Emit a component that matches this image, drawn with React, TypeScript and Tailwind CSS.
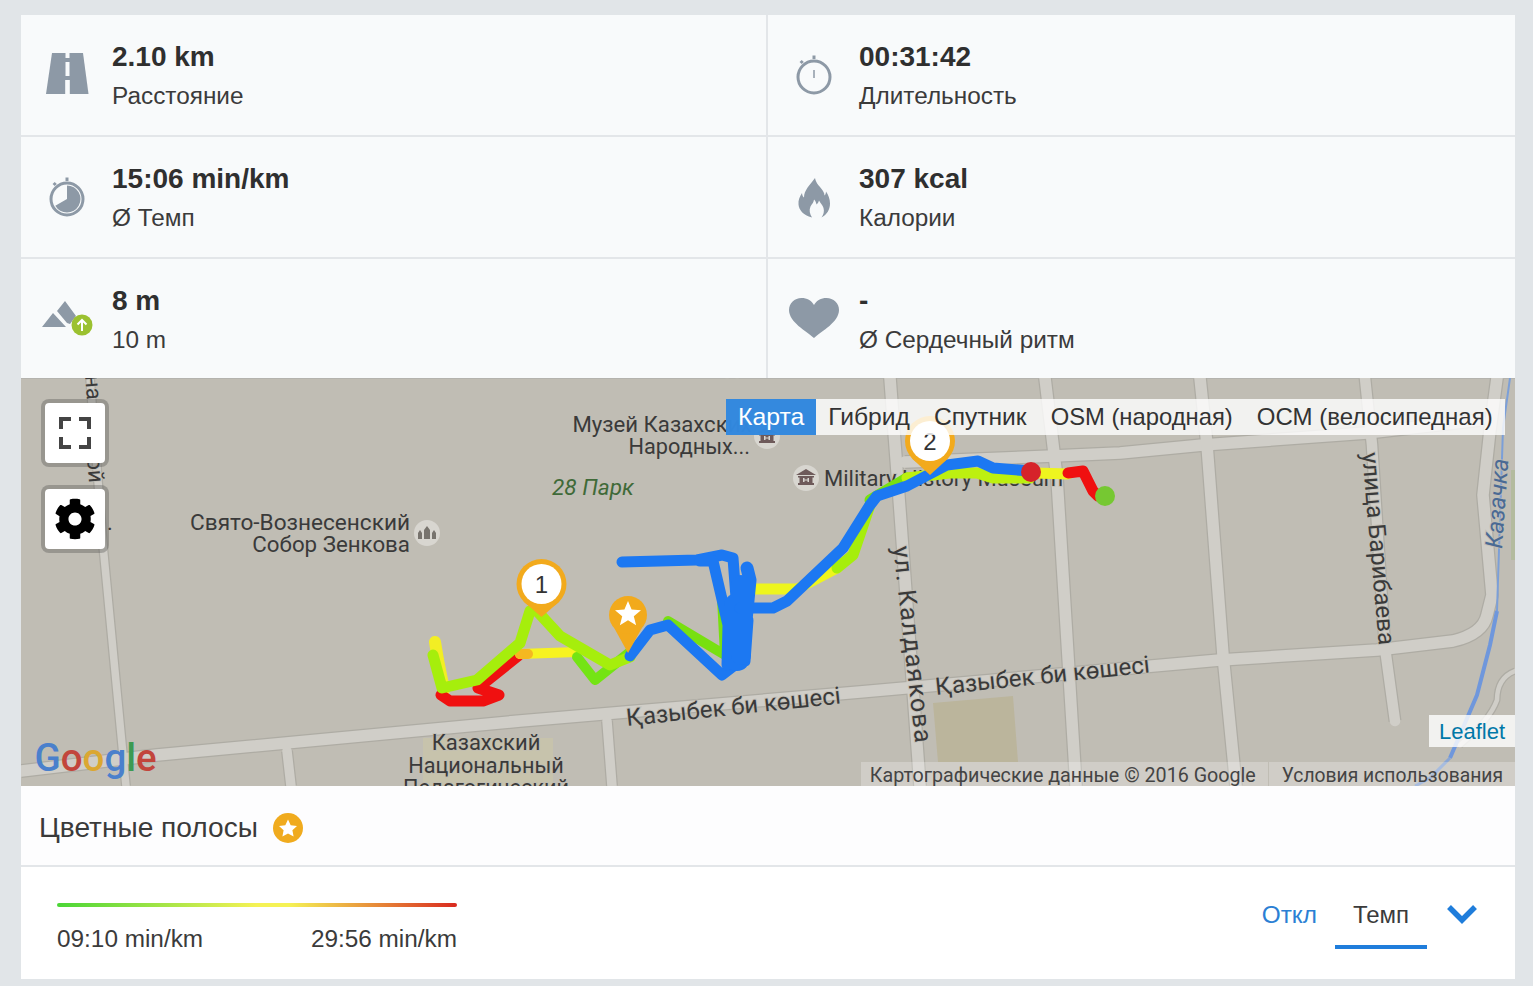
import React from "react";
import { FaCog } from "react-icons/fa";

const G = "#8d99a6";

function RoadIcon() {
  return (
    <svg className="mb-1" width="44" height="42" viewBox="0 0 44 42">
      <path fill={G} d="M7 0h31l5.500 41H1z" />
      <path fill="#f8fafb" d="M20.500 0h4v5h-4zM20.500 9h4v14h-4zM20.200 27h4.600v14h-4.600z" />
    </svg>
  );
}
function WatchIcon() {
  return (
    <svg width="40" height="42" viewBox="0 0 40 42">
      <rect x="18.500" y="0.500" width="3" height="3.500" fill={G} />
      <rect x="6" y="6" width="3" height="3" fill={G} transform="rotate(-45 7 7)" />
      <circle cx="20" cy="22" r="16" fill="none" stroke={G} strokeWidth="3" />
      <path d="M20 22V8.500a13.500 13.500 0 1 1-11.700 20.250z" fill={G} />
    </svg>
  );
}
function TimerIcon() {
  return (
    <svg width="40" height="42" viewBox="0 0 40 42">
      <rect x="18.500" y="0.500" width="3" height="3.500" fill={G} />
      <rect x="6" y="6" width="3" height="3" fill={G} transform="rotate(-45 7 7)" />
      <circle cx="20" cy="22" r="16" fill="none" stroke={G} strokeWidth="3" />
      <rect x="19.250" y="15" width="1.500" height="8" fill={G} />
    </svg>
  );
}
function FlameIcon() {
  return (
    <svg width="32" height="40" viewBox="0 0 32 40">
      <path
        fill={G}
        d="M17 0c1 6 5 8 8 13 1 1.500 1.500 3 1.500 4.500 1-1 1.500-2.500 1.500-4 2.500 3.500 4 7.500 4 12 0 6-3 11-8.500 14 2-3 3-6 2-9.500-.8-3-3-4.500-4.500-7.500-.5 2-1.500 3-2.500 4-.5-2.500-1-3.500-2.500-5-.2 3-2.200 4.500-3.500 7-1.600 3.500-.8 7.500 1.500 11C5 37 1 32 .5 26.500 0 22 2 18 4 15c.2 2 .8 3.500 2 4.500C6 12 12 7 17 0z"
      />
    </svg>
  );
}
function HeartIcon() {
  return (
    <svg className="mb-[3px]" width="50" height="40" viewBox="0 0 50 40">
      <path
        fill={G}
        d="M25 40C17 33 0 24 0 12 0 5 5.500 0 12.500 0 18 0 22.500 2.500 25 7 27.500 2.500 32 0 37.500 0 44.500 0 50 5 50 12c0 12-17 21-25 28z"
      />
    </svg>
  );
}
function MountainIcon() {
  return (
    <svg className="ml-[3px]" width="52" height="38" viewBox="0 0 52 38">
      <path fill={G} d="M0 26 11 12 24 26zM15 10 23 0l11 15-6 8-3-1z" />
      <circle cx="40" cy="24" r="10.500" fill="#9bc130" />
      <path d="M40 30v-11M35.500 23.500 40 19l4.500 4.500" fill="none" stroke="#fff" strokeWidth="2" />
    </svg>
  );
}

function Stat({
  icon,
  value,
  label,
  border,
  h,
}: {
  icon: React.ReactNode;
  value: string;
  label: string;
  border?: boolean;
  h: string;
}) {
  return (
    <div className={`flex ${h} ${border ? "border-r-2 border-[#e3e6e9]" : ""}`}>
      <div className="flex w-[91px] shrink-0 items-center justify-center pt-[2px]">{icon}</div>
      <div className="pt-6">
        <div className="h-9 text-[28px] leading-9 font-bold text-[#2f2f2f]">{value}</div>
        <div className="mt-[3px] h-9 text-[24.35px] leading-9 text-[#3b3b3b]">{label}</div>
      </div>
    </div>
  );
}

const blue = "#1c78f2";

function Road({ d, w = 14 }: { d: string; w?: number }) {
  return (
    <g fill="none" strokeLinejoin="round">
      <path d={d} stroke="#aeaca4" strokeWidth={w} />
    </g>
  );
}
function RoadFill({ d, w = 12 }: { d: string; w?: number }) {
  return <path d={d} fill="none" stroke="#d0cec8" strokeWidth={w} strokeLinejoin="round" strokeLinecap="round" />;
}

const roads = [
  { d: "M21 771 157 755 520 721 860 692 1220 660 1377 650 1453 641Q1483 634 1487 615L1492 595 1483 495 1490 430 1497 378", w: 14 },
  { d: "M905 462 1053 456 1120 453 1203 445 1367 433 1480 420", w: 14 },
  { d: "M890 378 900 511 920 786", w: 14 },
  { d: "M1045 378 1057 478 1076 786", w: 14 },
  { d: "M1200 378 1207 445 1223 655 1236 786", w: 14 },
  { d: "M1365 378 1372 445 1385 648 1395 721", w: 13 },
  { d: "M90 378 103 545 123 755 126 786", w: 10 },
  { d: "M287 751 291 786", w: 12 },
  { d: "M607 721 612 786", w: 12 },
  { d: "M1515 671Q1497 678 1497 700 1490 720 1460 745", w: 7 },
];

function Pin({ cx, cy, r, tip, inner }: { cx: number; cy: number; r: number; tip: number; inner: number }) {
  return (
    <g>
      <path
        d={`M${cx - r * 0.72} ${cy + r * 0.7} L${cx} ${tip} L${cx + r * 0.72} ${cy + r * 0.7}Z`}
        fill="#f2aa1c"
      />
      <circle cx={cx} cy={cy} r={r} fill="#f2aa1c" />
      {inner > 0 && <circle cx={cx} cy={cy} r={inner} fill="#fff" />}
    </g>
  );
}

function Poi({ cx, cy, kind }: { cx: number; cy: number; kind: "church" | "museum" }) {
  return (
    <g>
      <circle cx={cx} cy={cy} r="13" fill="#d8d6d0" />
      {kind === "church" ? (
        <path
          fill="#77736d"
          d={`M${cx - 9} ${cy + 6}v-6l2-3 2 3v6zM${cx - 3} ${cy + 6}v-9l3-4 3 4v9zM${cx + 5} ${cy + 6}v-6l2-3 2 3v6z`}
        />
      ) : (
        <path
          fill="#6e5a5a"
          d={`M${cx} ${cy - 9}l10 6h-20zM${cx - 8} ${cy - 2}h16v1.500h-1.500v5.500h1.500v2h-16v-2h1.500v-5.500h-1.500zM${cx - 3} ${cy}v4h1.500v-1.500h3v1.500h1.500v-4h-1.500v1.500h-3v-1.500z`}
          fillRule="evenodd"
        />
      )}
    </g>
  );
}

function MapLabel({
  x,
  y,
  children,
  anchor = "start",
  size = 22,
  rotate,
  fill = "#3a3a3a",
  italic,
  spacing,
}: {
  x: number;
  y: number;
  children: string;
  anchor?: "start" | "end" | "middle";
  size?: number;
  rotate?: number;
  fill?: string;
  italic?: boolean;
  spacing?: number;
}) {
  return (
    <text
      x={x}
      y={y}
      textAnchor={anchor}
      fontSize={size}
      fontFamily="Roboto, sans-serif"
      fontStyle={italic ? "italic" : "normal"}
      fill={fill}
      letterSpacing={spacing}
      stroke="#c0bdb4"
      strokeOpacity="0.75"
      strokeWidth="2"
      paintOrder="stroke"
      transform={rotate !== undefined ? `rotate(${rotate} ${x} ${y})` : undefined}
    >
      {children}
    </text>
  );
}

function MapSvg() {
  return (
    <svg className="absolute inset-0 block h-full w-full" viewBox="21 378 1494 408">
      <rect x="21" y="378" width="1494" height="408" fill="#c0bdb4" />
      <rect x="21" y="378" width="1494" height="1" fill="#b4b3ae" />
      <rect x="1511" y="470" width="4" height="90" fill="#b3bb9e" />
      <path d="M933 703 1013 696 1018 762 938 762Z" fill="#bbb59c" />
      <rect x="423" y="738" width="130" height="48" fill="#c7c3ac" />
      {roads.map((r) => (
        <Road key={r.d} d={r.d} w={r.w} />
      ))}
      {roads.map((r) => (
        <RoadFill key={r.d} d={r.d} w={r.w - 2.500} />
      ))}
      <path d="M1510 378 1503 428 1497 611" fill="none" stroke="#7b9fd8" strokeWidth="2" />
      <path d="M1497 611 1490 645 1477 695 1450 758" fill="none" stroke="#6f97dc" strokeWidth="4" />
      <path d="M1450 758 1430 778 1415 786" fill="none" stroke="#8aa6d4" strokeWidth="3" />

      <MapLabel x={410} y={530} anchor="end" size={22.6}>Свято-Вознесенский</MapLabel>
      <MapLabel x={410} y={552} anchor="end" size={22.3}>Собор Зенкова</MapLabel>
      <MapLabel x={751.500} y={432} anchor="end" size={22.2}>Музей Казахских</MapLabel>
      <MapLabel x={750} y={454} anchor="end" size={21.7}>Народных...</MapLabel>
      <MapLabel x={552} y={495} italic fill="#3f6a38" size={22.6}>28 Парк</MapLabel>
      <MapLabel x={824} y={486}>Military History Museum</MapLabel>
      <MapLabel x={486} y={750} anchor="middle">Казахский</MapLabel>
      <MapLabel x={486} y={773} anchor="middle" size={21.7}>Национальный</MapLabel>
      <MapLabel x={486} y={795} anchor="middle" size={21.7}>Педагогический</MapLabel>
      <MapLabel x={627} y={726} rotate={-6} size={24}>Қазыбек би көшесі</MapLabel>
      <MapLabel x={936} y={695} rotate={-6} size={24}>Қазыбек би көшесі</MapLabel>
      <MapLabel x={893} y={547} rotate={83.500} size={25} spacing={1.300}>ул. Калдаякова</MapLabel>
      <MapLabel x={1362} y={453} rotate={85} size={24}>улица Барибаева</MapLabel>
      <MapLabel x={1502} y={549} rotate={-86} size={24} italic fill="#4a6a94">Казачка</MapLabel>
      <MapLabel x={726} y={358} rotate={90}>St</MapLabel>
      <MapLabel x={84} y={364} rotate={85}>ена</MapLabel>
      <MapLabel x={87} y={458} rotate={85}>ой</MapLabel>
      <MapLabel x={107} y={530}>.</MapLabel>

      <Poi cx={427} cy={533} kind="church" />
      <Poi cx={767} cy={436} kind="museum" />
      <Poi cx={806} cy={478} kind="museum" />

      {/* track, colour layer */}
      <g fill="none" strokeWidth="10" strokeLinecap="round" strokeLinejoin="round">
        <path d="M435 642 438 660 444 690" stroke="#f2ee24" strokeWidth="12" />
        <path d="M441 695 450 701H483L499 695 478 688 518 656" stroke="#f01010" strokeWidth="11" />
        <path d="M520 654 577 652" stroke="#f7f320" />
        <path d="M520 654H528" stroke="#f5b820" />
        <path d="M577 657 595 680 610 668 630 652" stroke="#74e414" />
        <path d="M433 655 442 688 477 680 520 643 530 611 537 611 560 636 610 665 630 657" stroke="#a6ee0c" strokeWidth="11" />
        <path d="M668 621 725 655 722 598" stroke="#78e010" />
        <path d="M752 589H797L837 568" stroke="#eef51e" strokeWidth="11" />
        <path d="M837 568 853 555 870 505" stroke="#a6ee0c" strokeWidth="11" />
        <path d="M870 500 907 478" stroke="#78e010" strokeWidth="11" />
        <path d="M907 478 950 473H977L993 478H1030" stroke="#bdf010" strokeWidth="11" />
        <path d="M1035 473 1068 474" stroke="#eef51e" strokeWidth="11" />
        <path d="M1068 473 1083 471 1093 491 1098 496" stroke="#f01010" strokeWidth="11" />
      </g>
      {/* track, blue layer */}
      <g fill="none" stroke={blue} strokeWidth="11" strokeLinecap="round" strokeLinejoin="round">
        <path d="M630 656 650 630 668 625 722 675 735 665 745 661 748 620" />
        <path d="M747 568 750 580 746 620" strokeWidth="13" />
        <path d="M622 562 697 560 722 555 733 558 737 611 732 665" />
        <path d="M700 561 713 561 728 625 727 665" />
        <path d="M737 606V658" strokeWidth="26" />
        <path d="M741 585 741 655" strokeWidth="20" />
        <path d="M740 608H773L787 601 843 548 870 505 877 496 907 486 947 465 978 461 993 468 1030 471" />
      </g>
      <circle cx="1031" cy="472" r="10" fill="#d6232a" />
      <circle cx="1105" cy="496" r="10" fill="#76c832" />

      <Pin cx={541.500} cy={584} r={25} tip={617} inner={20} />
      <text x={541.500} y={593} textAnchor="middle" fontSize="24" fontFamily="Liberation Sans, sans-serif" fill="#333">1</text>
      <Pin cx={628} cy={615} r={19} tip={653} inner={0} />
      <path
        fill="#fff"
        d="M628 601l3.600 8.500 9.400.700-7.200 6 2.300 9-8.100-4.900-8.100 4.900 2.300-9-7.200-6 9.400-.700z"
      />
      <Pin cx={930} cy={441} r={25} tip={475} inner={20} />
      <text x={930} y={450} textAnchor="middle" fontSize="24" fontFamily="Liberation Sans, sans-serif" fill="#333">2</text>

      <text x={34.500} y={771} fontSize="38.500" fontFamily="Roboto, sans-serif" fontWeight="500">
        <tspan fill="#4a80cc">G</tspan>
        <tspan fill="#c2453c">o</tspan>
        <tspan fill="#dba731">o</tspan>
        <tspan fill="#4a80cc">g</tspan>
        <tspan fill="#3c9a52">l</tspan>
        <tspan fill="#c2453c">e</tspan>
      </text>
    </svg>
  );
}

function ControlBox({ children, className }: { children: React.ReactNode; className: string }) {
  return (
    <div
      className={`absolute left-5 flex h-[68px] w-[68px] items-center justify-center rounded-lg border-4 border-[rgba(60,60,60,0.3)] bg-white bg-clip-padding ${className}`}
    >
      {children}
    </div>
  );
}

function MapPanel() {
  return (
    <div className="relative h-[408px] overflow-hidden bg-[#c0bdb4]">
      <MapSvg />
      <ControlBox className="top-[21px]">
        <svg width="34" height="34" viewBox="0 0 34 34" fill="none" stroke="#444" strokeWidth="4">
          <path d="M13 3H3v10M21 3h10v10M13 31H3V21M21 31h10V21" />
        </svg>
      </ControlBox>
      <ControlBox className="top-[107px]">
        <FaCog size={42} color="#000" />
      </ControlBox>
      <div className="absolute top-[21px] left-[705px] flex h-9 bg-white/80 text-[#333]">
        <div className="bg-[#1f7ddb]/90 px-3 text-[24.8px] leading-9 text-white">Карта</div>
        <div className="px-3 text-[24.6px] leading-9">Гибрид</div>
        <div className="px-3 text-[24.6px] leading-9">Спутник</div>
        <div className="px-3 text-[23.8px] leading-9">OSM (народная)</div>
        <div className="px-3 text-[24px] leading-9">ОСМ (велосипедная)</div>
      </div>
      <div className="absolute right-0 bottom-[39px] flex h-8 w-[86px] items-center justify-center bg-white/80 text-[22px] text-[#0078a8]">
        Leaflet
      </div>
      <div className="absolute right-0 bottom-0 flex h-6 items-start font-['Roboto',sans-serif] text-[#444]">
        <div className="h-6 bg-white/25 pr-3 pl-[9px] text-[19.7px] leading-[27px]">Картографические данные © 2016 Google</div>
        <div className="ml-px h-6 bg-white/25 pr-3 pl-[13px] text-[19.3px] leading-[27px]">Условия использования</div>
      </div>
    </div>
  );
}

export default function App() {
  return (
    <div className="min-h-[986px] bg-[#e1e5e8] pt-[15px] pr-[18px] pb-[7px] pl-[21px] font-['Liberation_Sans',sans-serif]">
      <div className="bg-[#f8fafb]">
        <div className="grid grid-cols-[747px_747px] border-b-2 border-[#e3e6e9]">
          <Stat border h="h-[120px]" icon={<RoadIcon />} value="2.10 km" label="Расстояние" />
          <Stat h="h-[120px]" icon={<TimerIcon />} value="00:31:42" label="Длительность" />
        </div>
        <div className="grid grid-cols-[747px_747px] border-b-2 border-[#e3e6e9]">
          <Stat border h="h-[120px]" icon={<WatchIcon />} value="15:06 min/km" label="Ø Темп" />
          <Stat h="h-[120px]" icon={<FlameIcon />} value="307 kcal" label="Калории" />
        </div>
        <div className="grid grid-cols-[747px_747px]">
          <Stat border h="h-[119px]" icon={<MountainIcon />} value="8 m" label="10 m" />
          <Stat h="h-[119px]" icon={<HeartIcon />} value="-" label="Ø Сердечный ритм" />
        </div>
      </div>
      <MapPanel />
      <div className="flex h-[81px] items-center gap-[15px] border-b-2 border-[#e3e6e9] bg-[#fdfdfe] pt-[5px] pl-[18px]">
        <span className="text-[28.1px] text-[#3a3a3a]">Цветные полосы</span>
        <svg width="30" height="30" viewBox="0 0 30 30">
          <circle cx="15" cy="15" r="15" fill="#f0ab1e" />
          <path fill="#fff" d="M15 6.500l2.700 5.700 6.300.800-4.600 4.300 1.200 6.200-5.600-3.100-5.600 3.100 1.200-6.200L6 13l6.300-.800z" />
        </svg>
      </div>
      <div className="flex h-28 items-start justify-between bg-white pl-9">
        <div className="w-[400px] pt-9">
          <div className="h-1 rounded-full bg-[linear-gradient(90deg,#4ad636_0%,#f5f255_50%,#f5f255_58%,#d9291f_100%)]" />
          <div className="mt-[16px] flex justify-between text-[24.35px] leading-8 text-[#3b3b3b]">
            <span>09:10 min/km</span>
            <span>29:56 min/km</span>
          </div>
        </div>
        <div className="flex items-start pt-[32px]">
          <div className="mr-[18px] text-[24.35px] leading-8 text-[#2b7fd4]">Откл</div>
          <div className="mr-5 flex h-[50px] w-[92px] justify-center border-b-4 border-[#1f7ddb] text-2xl leading-8 text-[#3b3b3b]">
            Темп
          </div>
          <svg className="mt-[5px] mr-[38px]" width="30" height="20" viewBox="0 0 30 20" fill="none" stroke="#1f7ddb" strokeWidth="5.500">
            <path d="M2 3l13 13L28 3" />
          </svg>
        </div>
      </div>
    </div>
  );
}
